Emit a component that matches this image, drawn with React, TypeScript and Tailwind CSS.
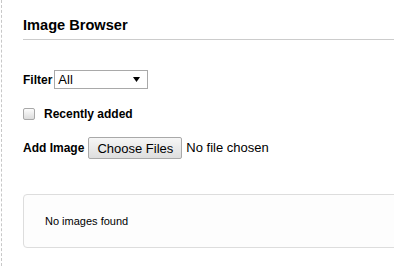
import { useState } from "react";

export default function App() {
  const [recent, setRecent] = useState(false);

  return (
    <div className="min-h-[266px] w-[394px] overflow-hidden bg-white pl-px font-['Liberation_Sans',Arial,sans-serif] text-black">
      <div className="min-h-[266px] border-l border-dashed border-[#c8c8c8] pl-[21px]">
        {/* header */}
        <h1 className="border-b border-[#cccccc] pb-[5px] pt-[16px] text-[14.6px] font-bold leading-[18px]">
          Image Browser
        </h1>

        {/* filter */}
        <div className="mt-[30px] flex items-center gap-[2px]">
          <span className="text-[12px] font-bold">Filter</span>
          <div className="flex h-[19px] w-[94px] items-center justify-between border border-[#a9a9a9] bg-white pl-[3px] pr-[7px]">
            <span className="text-[13px] leading-none">All</span>
            <svg width="7" height="5" viewBox="0 0 7 5">
              <path d="M0 0h7L3.5 5z" fill="#000" />
            </svg>
          </div>
        </div>

        {/* recently added */}
        <label className="mt-[16px] flex cursor-pointer items-center">
          <input
            type="checkbox"
            className="sr-only"
            checked={recent}
            onChange={(e) => setRecent(e.target.checked)}
          />
          <span className="h-[12px] w-[12px] rounded-[2px] border border-[#a8a8a8] bg-gradient-to-b from-[#fcfcfc] to-[#dcdcdc]" />
          <span className="ml-[9px] text-[12px] font-bold">Recently added</span>
        </label>

        {/* add image */}
        <div className="mt-[14px] flex items-center">
          <span className="text-[12px] font-bold">Add Image</span>
          <button className="ml-[4px] h-[22px] w-[94px] rounded-[2px] border border-[#a9a9a9] bg-gradient-to-b from-[#f6f6f6] to-[#dedede] text-[13px] leading-none text-black">
            Choose Files
          </button>
          <span className="ml-[4px] text-[13px]">No file chosen</span>
        </div>

        {/* images */}
        <div className="mr-[-4px] mt-[35px] flex h-[54px] items-center rounded-[4px] border border-[#dddddd] bg-[#fdfdfd] pl-[21px]">
          <p className="text-[11px]">No images found</p>
        </div>
      </div>
    </div>
  );
}
